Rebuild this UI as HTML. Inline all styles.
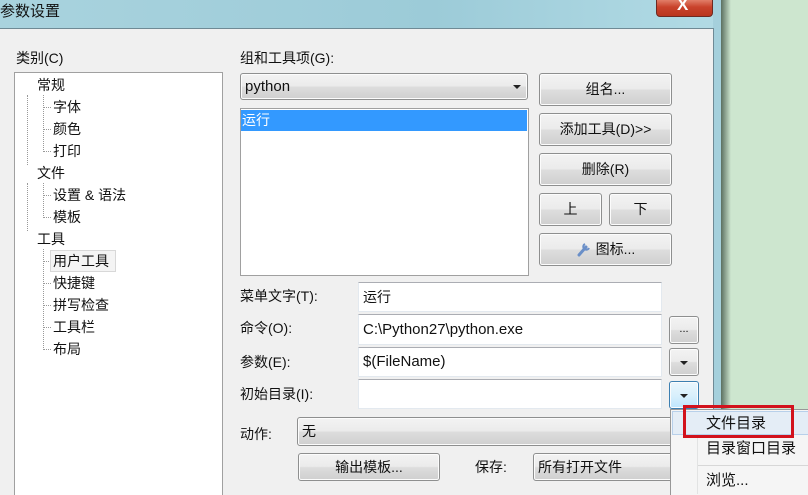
<!DOCTYPE html>
<html style="width:808px;height:495px;overflow:hidden"><head><meta charset="utf-8"><style>
*{margin:0;padding:0;box-sizing:border-box}
body{width:808px;height:495px;overflow:hidden;position:relative;background:#cde6cf;font-family:"Liberation Sans","Noto Sans CJK SC",sans-serif;font-size:14px;color:#111}
.a{position:absolute}
.btn{position:absolute;border:1px solid #8e8f8f;border-radius:3px;background:linear-gradient(#f3f3f3 0%,#ebebeb 48%,#dddddd 52%,#cfcfcf 100%);text-align:center;font-size:14px;box-shadow:inset 0 0 0 1px #fcfcfc}
.inp{position:absolute;background:#fff;border:1px solid #e3e9ef;border-top-color:#abadb3;padding-left:4px;font-size:14px}
.t{position:absolute;font-size:14px;line-height:20px}
.dots{position:absolute;border-left:1px dotted #999}
.h{position:absolute;border-top:1px dotted #999;width:8px}
.arr{position:absolute;width:0;height:0;border-left:4px solid transparent;border-right:4px solid transparent;border-top:4px solid #222}
</style></head><body>
<div class="a" style="left:0;top:0;width:721px;height:28px;background:linear-gradient(90deg,#a9d3de,#9ccbd8 60%,#b2dbe5)"></div>
<div class="a" style="left:0;top:0;font-size:15px;line-height:24px">参数设置</div>
<div class="a" style="left:656px;top:-3px;width:57px;height:20px;border:1px solid #6d2a22;border-radius:0 0 4px 4px;background:linear-gradient(#e8907a,#c9432c 50%,#b9361f)"></div>
<div class="a" style="left:677px;top:-5px;color:#fff;font-size:17px;font-weight:bold">X</div>
<div class="a" style="left:713px;top:0;width:8px;height:495px;background:#a5d0dc"></div>
<div class="a" style="left:721px;top:0;width:10px;height:495px;background:linear-gradient(90deg,#5a6f60,#cde6cf)"></div>
<div class="a" style="left:0;top:28px;width:714px;height:467px;background:#f0f0f0;border-top:1px solid #6f8a95;border-right:1px solid #6f8a95"></div>

<div class="t" style="left:16px;top:48px">类别(C)</div>
<div class="a" style="left:14px;top:72px;width:209px;height:430px;background:#fff;border:1px solid #a0a0a0"></div>
<div class="dots" style="left:27px;top:95px;height:70px"></div>
<div class="dots" style="left:27px;top:183px;height:48px"></div>
<div class="dots" style="left:43px;top:95px;height:57px"></div>
<div class="dots" style="left:43px;top:183px;height:35px"></div>
<div class="dots" style="left:43px;top:249px;height:101px"></div>
<div class="h" style="left:43px;top:107px"></div><div class="h" style="left:43px;top:129px"></div><div class="h" style="left:43px;top:151px"></div>
<div class="h" style="left:43px;top:195px"></div><div class="h" style="left:43px;top:217px"></div>
<div class="h" style="left:43px;top:261px"></div><div class="h" style="left:43px;top:283px"></div><div class="h" style="left:43px;top:305px"></div><div class="h" style="left:43px;top:327px"></div><div class="h" style="left:43px;top:349px"></div>
<div class="t" style="left:37px;top:75px">常规</div>
<div class="t" style="left:53px;top:97px">字体</div>
<div class="t" style="left:53px;top:119px">颜色</div>
<div class="t" style="left:53px;top:141px">打印</div>
<div class="t" style="left:37px;top:163px">文件</div>
<div class="t" style="left:53px;top:185px">设置 &amp; 语法</div>
<div class="t" style="left:53px;top:207px">模板</div>
<div class="t" style="left:37px;top:229px">工具</div>
<div class="a" style="left:50px;top:250px;width:66px;height:22px;border:1px solid #d8d8d8;background:#f4f4f4"></div>
<div class="t" style="left:53px;top:251px">用户工具</div>
<div class="t" style="left:53px;top:273px">快捷键</div>
<div class="t" style="left:53px;top:295px">拼写检查</div>
<div class="t" style="left:53px;top:317px">工具栏</div>
<div class="t" style="left:53px;top:339px">布局</div>

<div class="t" style="left:240px;top:48px">组和工具项(G):</div>
<div class="btn" style="left:240px;top:73px;width:288px;height:27px;text-align:left;padding-left:4px;line-height:25px;font-size:15px">python</div>
<div class="arr" style="left:513px;top:85px"></div>
<div class="a" style="left:240px;top:108px;width:289px;height:168px;background:#fff;border:1px solid #a0a0a0"></div>
<div class="a" style="left:241px;top:110px;width:286px;height:21px;background:#3399ff;color:#fff;line-height:21px;padding-left:1px">运行</div>

<div class="btn" style="left:539px;top:73px;width:133px;height:33px;line-height:31px">组名...</div>
<div class="btn" style="left:539px;top:113px;width:133px;height:33px;line-height:31px">添加工具(D)&gt;&gt;</div>
<div class="btn" style="left:539px;top:153px;width:133px;height:33px;line-height:31px">删除(R)</div>
<div class="btn" style="left:539px;top:193px;width:63px;height:33px;line-height:31px">上</div>
<div class="btn" style="left:609px;top:193px;width:63px;height:33px;line-height:31px">下</div>
<div class="btn" style="left:539px;top:233px;width:133px;height:33px;line-height:31px"><svg width="16" height="16" viewBox="0 0 16 16" style="vertical-align:-3px"><path d="M3 14 L10 6" stroke="#6a8fc8" stroke-width="3" stroke-linecap="round"/><path d="M9 3 a3 3 0 1 0 4 4" stroke="#6a8fc8" stroke-width="2" fill="none"/></svg> 图标...</div>

<div class="t" style="left:240px;top:286px">菜单文字(T):</div>
<div class="inp" style="left:358px;top:282px;width:304px;height:30px;line-height:28px">运行</div>
<div class="t" style="left:240px;top:318px">命令(O):</div>
<div class="inp" style="left:358px;top:314px;width:304px;height:31px;line-height:29px;font-size:15px">C:\Python27\python.exe</div>
<div class="t" style="left:240px;top:352px">参数(E):</div>
<div class="inp" style="left:358px;top:347px;width:304px;height:30px;line-height:28px;font-size:15px">$(FileName)</div>
<div class="t" style="left:240px;top:384px">初始目录(I):</div>
<div class="inp" style="left:358px;top:379px;width:304px;height:30px"></div>
<div class="btn" style="left:669px;top:316px;width:30px;height:28px;line-height:24px;font-size:11px">...</div>
<div class="btn" style="left:669px;top:348px;width:30px;height:28px"></div><div class="arr" style="left:680px;top:361px"></div>
<div class="btn" style="left:669px;top:381px;width:30px;height:28px;border-color:#3c7fb1;background:linear-gradient(#eaf6fd,#d9f0fc 50%,#bee6fd)"></div><div class="arr" style="left:680px;top:394px"></div>

<div class="t" style="left:240px;top:424px">动作:</div>
<div class="btn" style="left:297px;top:417px;width:380px;height:29px;text-align:left;padding-left:4px;line-height:27px">无</div>
<div class="btn" style="left:298px;top:453px;width:142px;height:28px;line-height:26px">输出模板...</div>
<div class="t" style="left:475px;top:457px">保存:</div>
<div class="btn" style="left:533px;top:453px;width:144px;height:28px;text-align:left;padding-left:4px;line-height:26px">所有打开文件</div>

<div class="a" style="left:670px;top:409px;width:140px;height:90px;background:#f5f5f5;border:1px solid #979797"></div>
<div class="a" style="left:697px;top:412px;width:1px;height:82px;background:#e2e3e3"></div>
<div class="a" style="left:672px;top:411px;width:140px;height:24px;background:#e4edf6;border:1px solid #b8d0ea"></div>
<div class="a" style="left:698px;top:465px;width:110px;height:1px;background:#d7d7d7"></div>
<div class="t" style="left:706px;top:414px;font-size:15px">文件目录</div>
<div class="t" style="left:706px;top:439px;font-size:15px">目录窗口目录</div>
<div class="t" style="left:706px;top:471px;font-size:15px">浏览...</div>
<div class="a" style="left:683px;top:405px;width:111px;height:33px;border:3px solid #d2121c"></div>
</body></html>
